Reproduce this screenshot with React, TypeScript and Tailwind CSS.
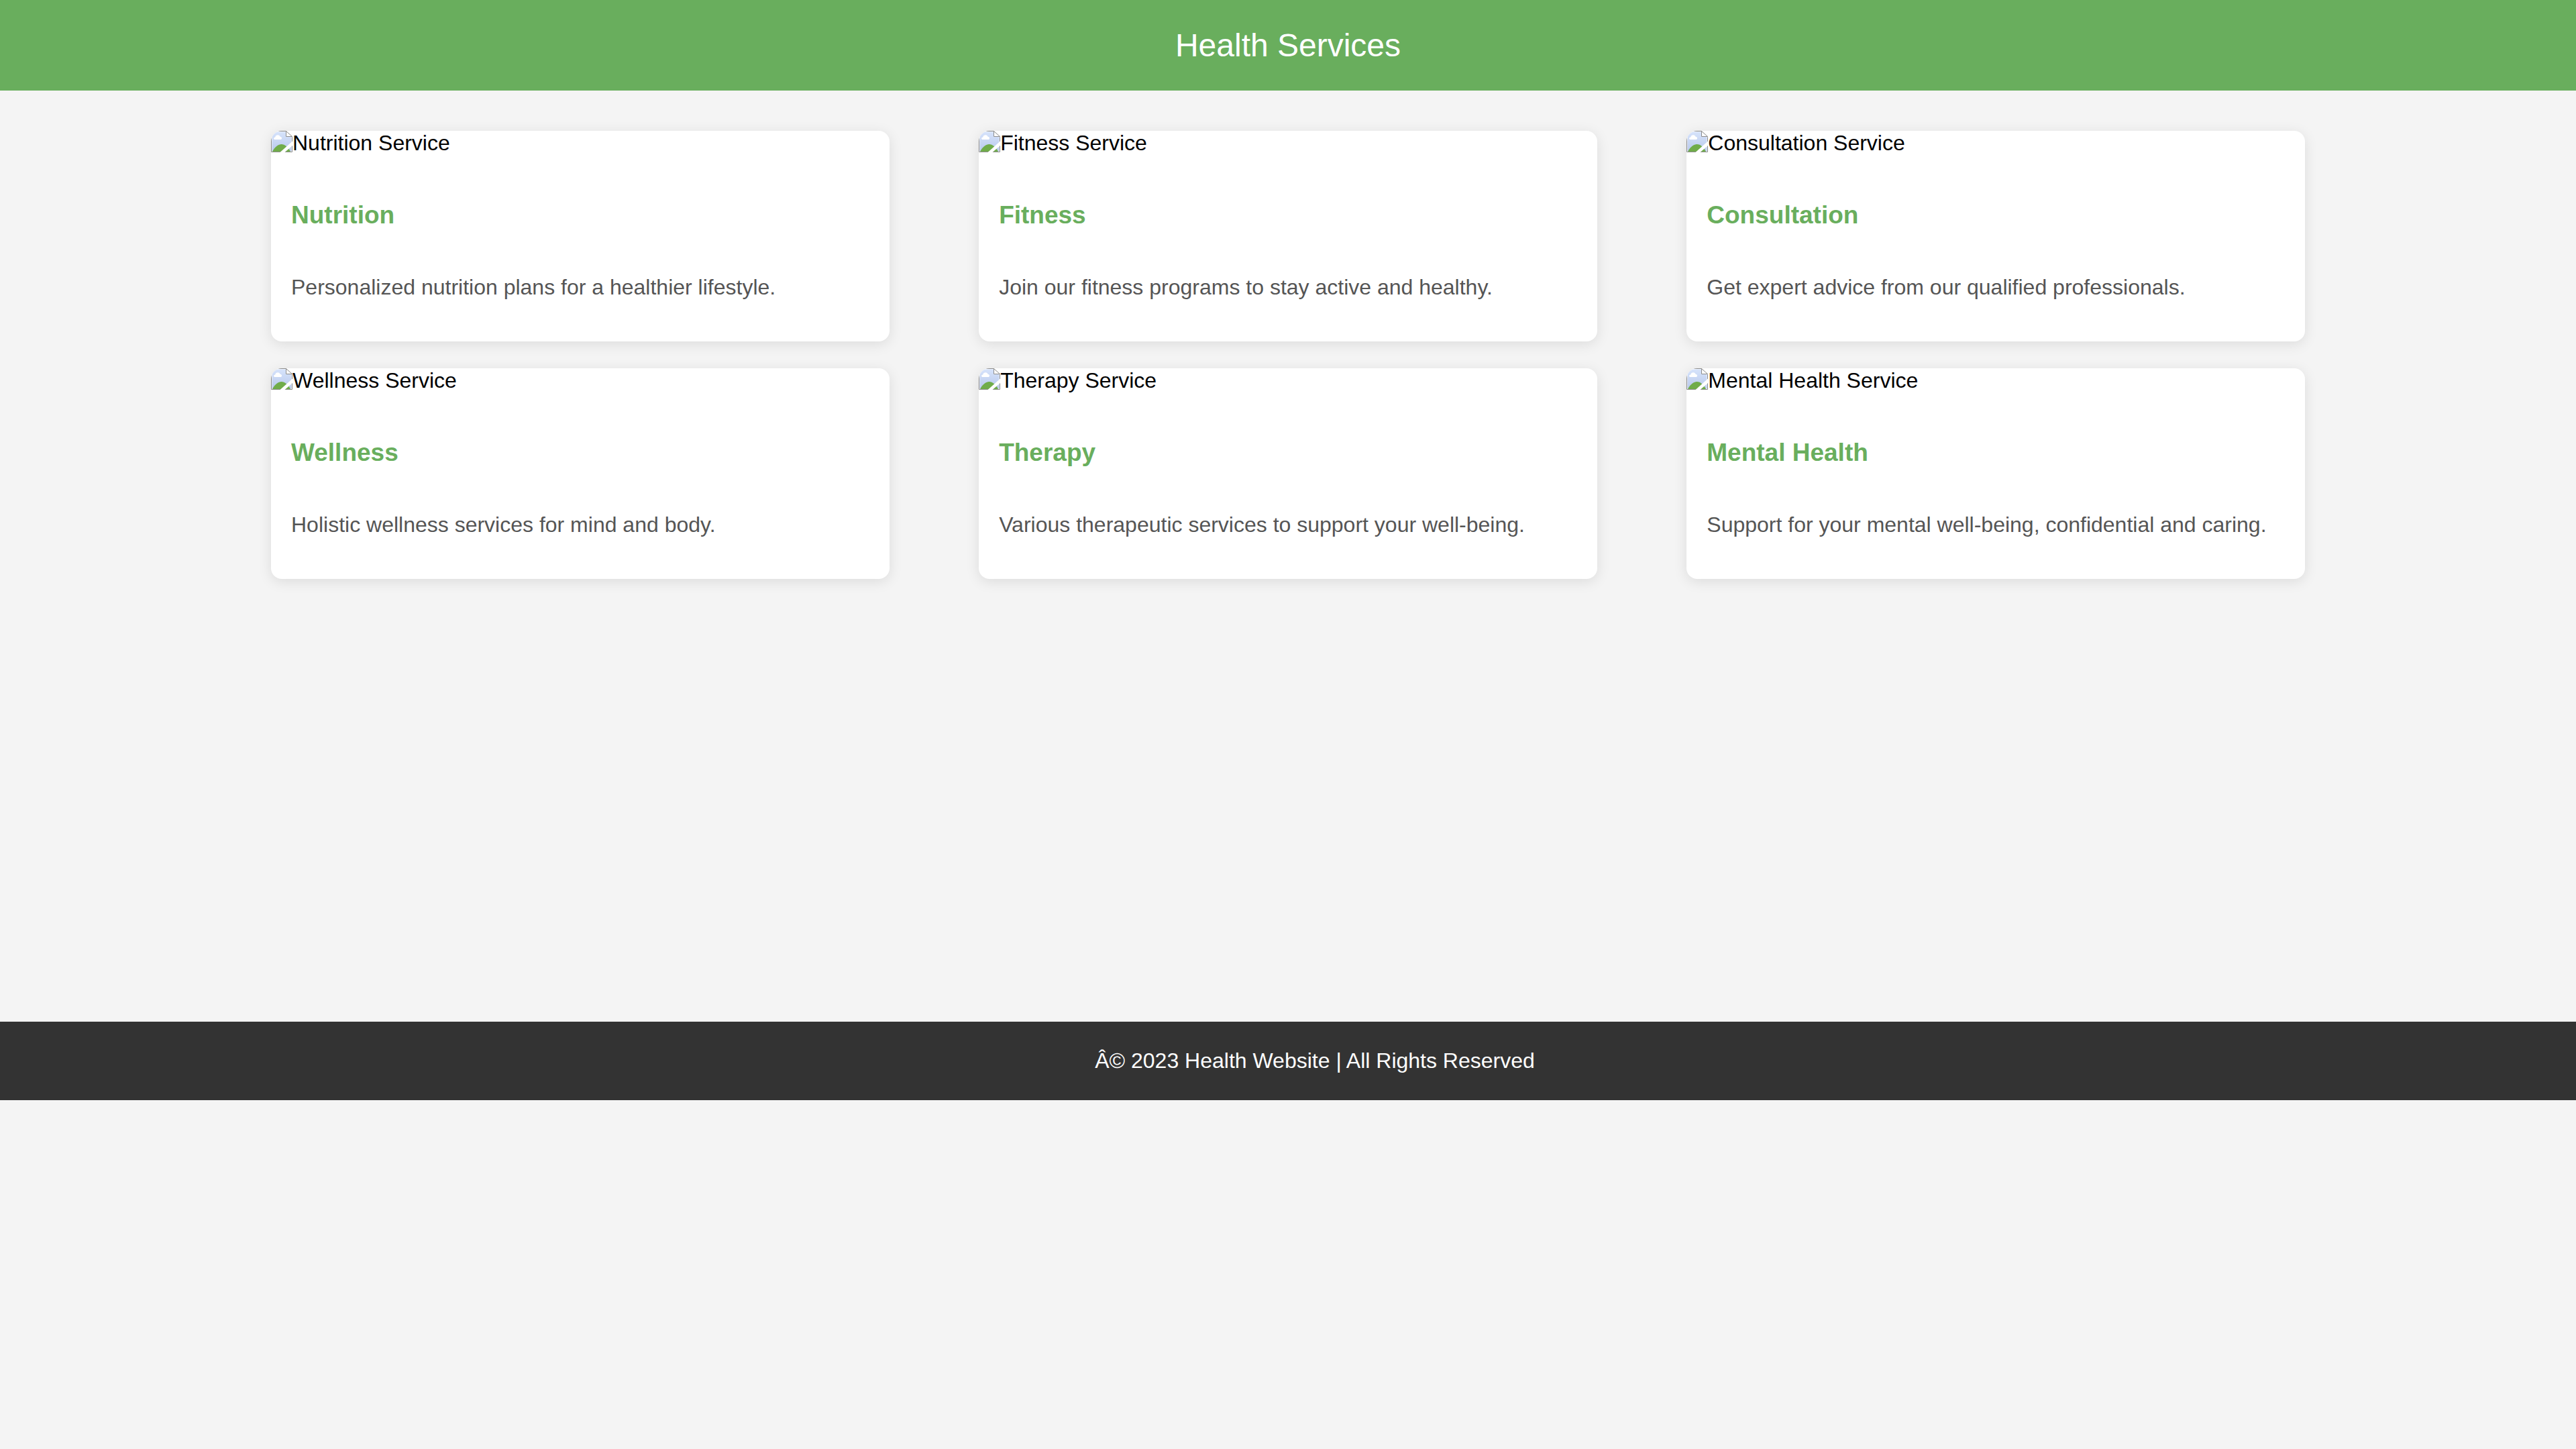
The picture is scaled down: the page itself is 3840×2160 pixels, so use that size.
const services = [
  { title: 'Nutrition', alt: 'Nutrition Service', text: 'Personalized nutrition plans for a healthier lifestyle.' },
  { title: 'Fitness', alt: 'Fitness Service', text: 'Join our fitness programs to stay active and healthy.' },
  { title: 'Consultation', alt: 'Consultation Service', text: 'Get expert advice from our qualified professionals.' },
  { title: 'Wellness', alt: 'Wellness Service', text: 'Holistic wellness services for mind and body.' },
  { title: 'Therapy', alt: 'Therapy Service', text: 'Various therapeutic services to support your well-being.' },
  { title: 'Mental Health', alt: 'Mental Health Service', text: 'Support for your mental well-being, confidential and caring.' },
];

function MissingImageIcon() {
  return (
    <svg viewBox="0 0 32 32" className="size-8 shrink-0" aria-hidden="true">
      <defs>
        <linearGradient id="sky" x1="0" y1="0" x2="0" y2="1">
          <stop offset="0" stopColor="#d6e3fb" />
          <stop offset="1" stopColor="#b9c9ec" />
        </linearGradient>
      </defs>
      <path d="M0.5 0.5H22.5L31.5 9.5V31.5H0.5Z" fill="#fff" />
      <path d="M1.5 1.5H22V9H30.5V30.5H1.5Z" fill="url(#sky)" />
      <path d="M2 31C6 23.5 11 20 15.5 20C20.5 20 25.5 24 29 31Z" fill="#70ac4a" />
      <path d="M6 13C3.5 13 3.2 9.8 6.3 9.4C6.6 5.4 13 5 13.6 8.8C16.6 8.8 16.8 13 14.5 13Z" fill="#fff" />
      <path d="M0.5 0.5H22.5L31.5 9.5V31.5H0.5Z" fill="none" stroke="#8c8c8c" />
      <path d="M22.5 0.5V8.5H31.5Z" fill="#fff" stroke="#8c8c8c" />
      <path d="M32 15.5V22L20.5 32H13.5Z" fill="#fff" />
    </svg>
  );
}

export default function App() {
  return (
    <div className="min-h-screen bg-[#f4f4f4] font-['Liberation_Sans',Arial,sans-serif] text-[32px] leading-[37px] text-black">
      <header className="bg-[#69ae5d] p-10 text-center text-white">
        <h1 className="text-5xl leading-[55px]">Health Services</h1>
      </header>
      <main className="mx-auto min-h-[1388px] w-4/5 px-5 pt-[60px]">
        <div className="flex flex-wrap justify-between gap-y-10">
          {services.map((s) => (
            <article
              key={s.title}
              className="w-[30.4%] overflow-hidden rounded-2xl bg-white shadow-[0_4px_20px_rgba(0,0,0,0.1)]"
            >
              <div className="flex items-start" role="img" aria-label={s.alt}>
                <MissingImageIcon />
                <span>{s.alt}</span>
              </div>
              <div className="px-[30px] pt-[67px] pb-[62px]">
                <h2 className="mb-[67px] text-[37px] leading-[44px] font-bold text-[#69ae5d]">{s.title}</h2>
                <p className="text-[#555]">{s.text}</p>
              </div>
            </article>
          ))}
        </div>
      </main>
      <footer className="bg-[#333] py-10 pl-20 text-center text-white">
        <p>Â© 2023 Health Website | All Rights Reserved</p>
      </footer>
    </div>
  );
}
